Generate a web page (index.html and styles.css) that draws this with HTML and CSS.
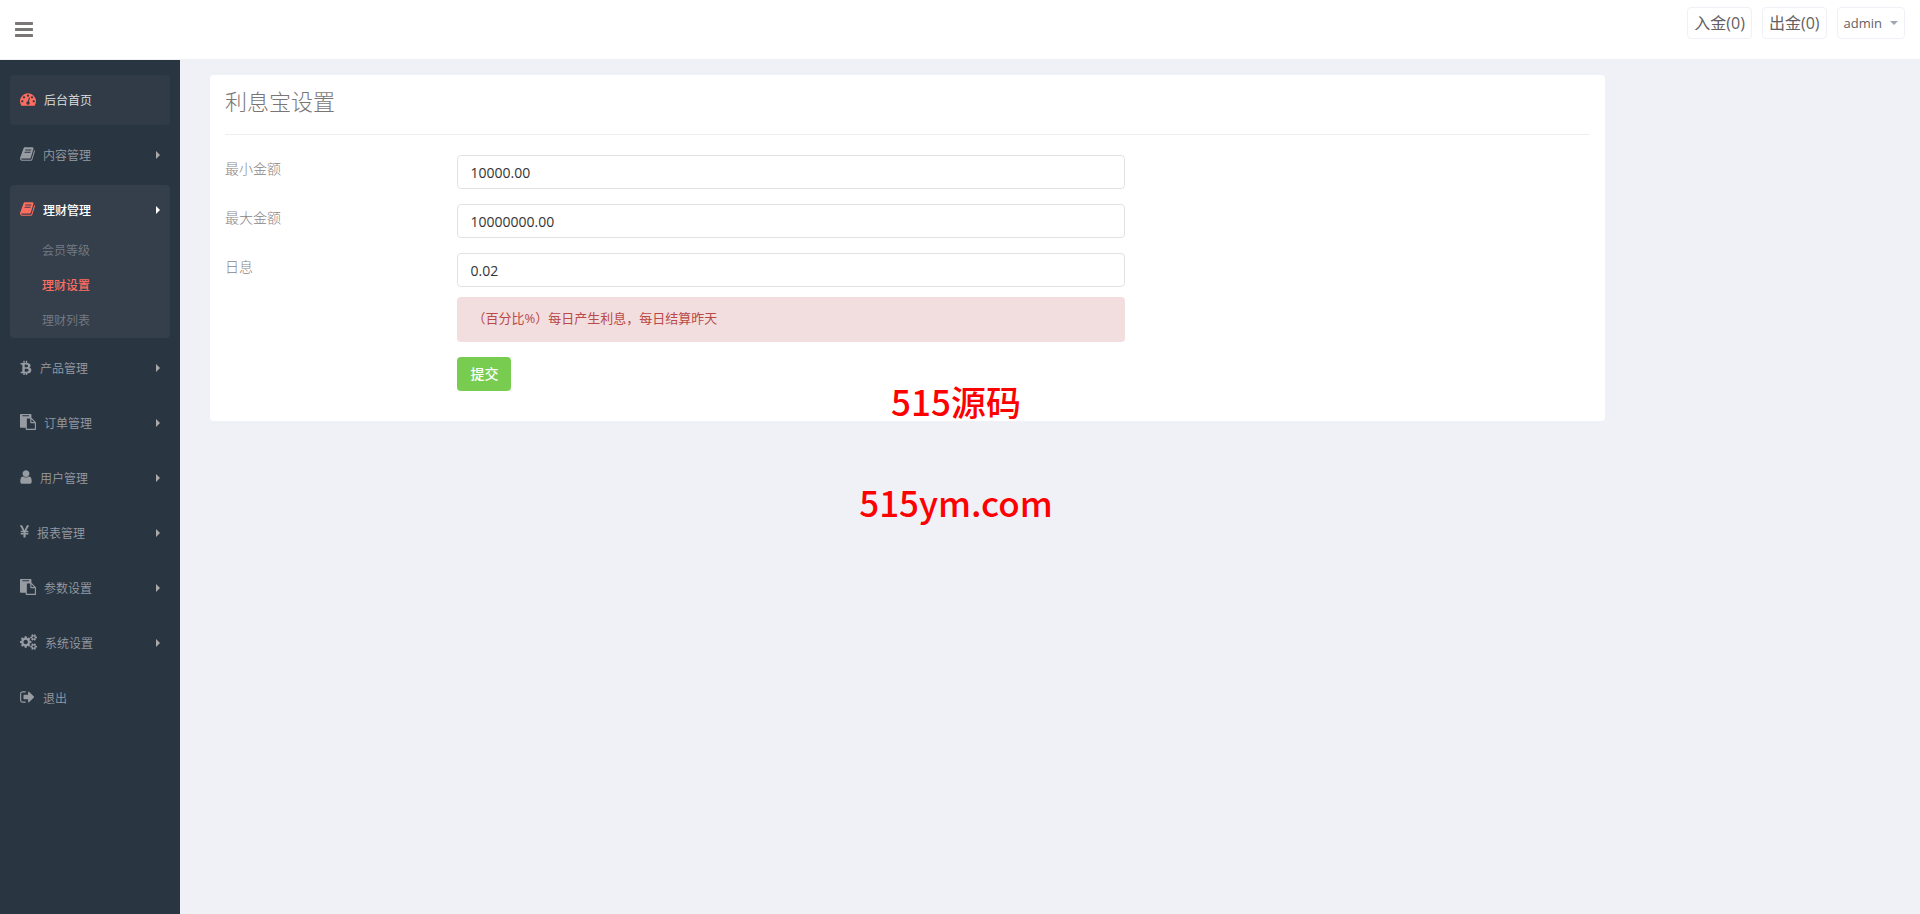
FILE: index.html
```html
<!DOCTYPE html>
<html lang="zh-CN">
<head>
  <meta charset="UTF-8" />
  <meta name="viewport" content="width=device-width, initial-scale=1.0">
  <title>利息宝设置</title>
  <link rel="stylesheet" href="styles.css">
</head>
<body>
  <header class="header">
    <button type="button" class="toggle-btn" aria-label="菜单">
      <svg class="icon" viewBox="128 256 1536 1280" width="18" height="15"><path d="M1664 1344v128q0 26-19 45t-45 19h-1408q-26 0-45-19t-19-45v-128q0-26 19-45t45-19h1408q26 0 45 19t19 45zm0-512v128q0 26-19 45t-45 19h-1408q-26 0-45-19t-19-45v-128q0-26 19-45t45-19h1408q26 0 45 19t19 45zm0-512v128q0 26-19 45t-45 19h-1408q-26 0-45-19t-19-45v-128q0-26 19-45t45-19h1408q26 0 45 19t19 45z"/></svg>
    </button>
    <div class="header-menu">
      <a href="#" class="header-btn">入金(0)</a>
      <a href="#" class="header-btn">出金(0)</a>
      <button type="button" class="header-btn user-btn">admin <span class="caret"></span></button>
    </div>
  </header>

  <div class="page">
    <nav class="sidebar">
      <ul class="menu">
        <li class="menu-item home">
          <a href="#">
            <svg class="icon" viewBox="0 0 1792 1792" width="16" height="16"><path d="M384 1152q0-53-37.5-90.5t-90.5-37.5-90.5 37.5-37.5 90.5 37.5 90.5 90.5 37.5 90.5-37.5 37.5-90.5zm192-448q0-53-37.5-90.5t-90.5-37.5-90.5 37.5-37.5 90.5 37.5 90.5 90.5 37.5 90.5-37.5 37.5-90.5zm428 481l101-382q6-26-7.5-48.5t-38.5-29.5-48 6.5-30 39.5l-101 382q-60 5-107 43.5t-63 98.5q-20 77 20 146t117 89 146-20 89-117q16-60-6-117t-72-91zm660-33q0-53-37.5-90.5t-90.5-37.5-90.5 37.5-37.5 90.5 37.5 90.5 90.5 37.5 90.5-37.5 37.5-90.5zm-640-640q0-53-37.5-90.5t-90.5-37.5-90.5 37.5-37.5 90.5 37.5 90.5 90.5 37.5 90.5-37.5 37.5-90.5zm448 192q0-53-37.5-90.5t-90.5-37.5-90.5 37.5-37.5 90.5 37.5 90.5 90.5 37.5 90.5-37.5 37.5-90.5zm320 448q0 261-141 483-19 29-54 29h-1402q-35 0-54-29-141-221-141-483 0-182 71-348t191-286 286-191 348-71 348 71 286 191 191 286 71 348z"/></svg>
            <span>后台首页</span>
          </a>
        </li>
        <li class="menu-item has-sub">
          <a href="#">
            <svg class="icon" viewBox="64 0 1664 1792" width="15" height="16"><path d="M1703 478q40 57 18 129l-275 906q-19 64-76.5 107.5t-122.5 43.5h-923q-77 0-148.5-53.5t-99.5-131.5q-24-67-2-127 0-4 3-27t4-37q1-8-3-21.5t-3-19.5q2-11 8-21t16.5-23.5 16.5-23.5q23-38 45-91.5t30-91.5q3-10 .5-30t-.5-28q3-11 17-28t17-23q21-36 42-92t25-90q1-9-2.5-32t.5-28q4-13 22-30.5t22-22.5q19-26 42.5-84.5t27.5-96.5q1-8-3-25.5t-2-26.5q2-8 9-18t18-23 17-21q8-12 16.5-30.5t15-35 16-36 19.5-32 26.5-23.5 36-11.5 47.5 5.5l-1 3q38-9 51-9h761q74 0 114 56t18 130l-274 906q-36 119-71.5 153.5t-128.5 34.5h-869q-27 0-38 15-11 16-1 43 24 70 144 70h923q29 0 56-15.5t35-41.5l300-987q7-22 5-57 38 15 59 43zm-1064 2q-4 13 2 22.5t20 9.5h608q13 0 25.5-9.5t16.5-22.5l21-64q4-13-2-22.5t-20-9.5h-608q-13 0-25.5 9.5t-16.5 22.5zm-83 256q-4 13 2 22.5t20 9.5h608q13 0 25.5-9.5t16.5-22.5l21-64q4-13-2-22.5t-20-9.5h-608q-13 0-25.5 9.5t-16.5 22.5z"/></svg>
            <span>内容管理</span>
          </a>
        </li>
        <li class="menu-item has-sub active">
          <a href="#">
            <svg class="icon" viewBox="64 0 1664 1792" width="15" height="16"><path d="M1703 478q40 57 18 129l-275 906q-19 64-76.5 107.5t-122.5 43.5h-923q-77 0-148.5-53.5t-99.5-131.5q-24-67-2-127 0-4 3-27t4-37q1-8-3-21.5t-3-19.5q2-11 8-21t16.5-23.5 16.5-23.5q23-38 45-91.5t30-91.5q3-10 .5-30t-.5-28q3-11 17-28t17-23q21-36 42-92t25-90q1-9-2.5-32t.5-28q4-13 22-30.5t22-22.5q19-26 42.5-84.5t27.5-96.5q1-8-3-25.5t-2-26.5q2-8 9-18t18-23 17-21q8-12 16.5-30.5t15-35 16-36 19.5-32 26.5-23.5 36-11.5 47.5 5.5l-1 3q38-9 51-9h761q74 0 114 56t18 130l-274 906q-36 119-71.5 153.5t-128.5 34.5h-869q-27 0-38 15-11 16-1 43 24 70 144 70h923q29 0 56-15.5t35-41.5l300-987q7-22 5-57 38 15 59 43zm-1064 2q-4 13 2 22.5t20 9.5h608q13 0 25.5-9.5t16.5-22.5l21-64q4-13-2-22.5t-20-9.5h-608q-13 0-25.5 9.5t-16.5 22.5zm-83 256q-4 13 2 22.5t20 9.5h608q13 0 25.5-9.5t16.5-22.5l21-64q4-13-2-22.5t-20-9.5h-608q-13 0-25.5 9.5t-16.5 22.5z"/></svg>
            <span>理财管理</span>
          </a>
          <ul class="sub-menu">
            <li><a href="#">会员等级</a></li>
            <li class="current"><a href="#">理财设置</a></li>
            <li><a href="#">理财列表</a></li>
          </ul>
        </li>
        <li class="menu-item has-sub">
          <a href="#">
            <svg class="icon" viewBox="256 0 1280 1792" width="12" height="16"><path d="M1399 713q18 182-131 258 117 28 175 103t45 214q-7 71-32.5 125t-64.5 89-97 58.5-121.5 34.5-145.5 15v255h-154v-251q-80 0-122-1v252h-154v-255q-18 0-54-.5t-55-.5h-200l31-183h111q50 0 58-51v-402h16q-6-1-16-1v-287q-13-68-89-68h-111v-164l212 1q64 0 97-1v-252h154v247q82-2 122-2v-245h154v252q79 7 140 22.5t113 45 82.5 78 36.5 114.5zm-215 545q0-36-15-64t-37-46-57.5-30.5-65.5-18.5-74-9-69-3-64.5 1-47.5 1v338q8 0 37 .5t48 .5 53-1.5 58.5-4 57-8.5 55.5-14 47.5-21 39.5-30 24.5-40 9.5-51zm-71-476q0-33-12.5-58.5t-30.5-42-48-28-55-16.5-61.5-8-58-2.5-54 1-39.5.5v307q5 0 34.5.5t46.5 0 50-2 55-5.5 51.5-11 48.5-18.5 37-27 27-38.5 9-51z"/></svg>
            <span>产品管理</span>
          </a>
        </li>
        <li class="menu-item has-sub">
          <a href="#">
            <svg class="icon" viewBox="0 0 1792 1792" width="16" height="16"><path d="M768 1664h896v-640h-416q-40 0-68-28t-28-68v-416h-384v1152zm256-1440v-64q0-13-9.5-22.5t-22.5-9.5h-704q-13 0-22.5 9.5t-9.5 22.5v64q0 13 9.5 22.5t22.5 9.5h704q13 0 22.5-9.5t9.5-22.5zm256 672h299l-299-299v299zm512 128v672q0 40-28 68t-68 28h-960q-40 0-68-28t-28-68v-160h-544q-40 0-68-28t-28-68v-1344q0-40 28-68t68-28h1088q40 0 68 28t28 68v328q21 13 36 28l408 408q28 28 48 76t20 88z"/></svg>
            <span>订单管理</span>
          </a>
        </li>
        <li class="menu-item has-sub">
          <a href="#">
            <svg class="icon" viewBox="256 0 1280 1792" width="12" height="16"><path d="M1536 1399q0 109-62.5 187t-150.5 78h-854q-88 0-150.5-78t-62.5-187q0-85 8.5-160.5t31.5-152 58.5-131 94-89 134.5-34.5q131 128 313 128t313-128q76 0 134.5 34.5t94 89 58.5 131 31.5 152 8.5 160.5zm-256-887q0 159-112.5 271.5t-271.5 112.5-271.5-112.5-112.5-271.5 112.5-271.5 271.5-112.5 271.5 112.5 112.5 271.5z"/></svg>
            <span>用户管理</span>
          </a>
        </li>
        <li class="menu-item has-sub">
          <a href="#">
            <svg class="icon" viewBox="384 0 1027 1792" width="9" height="16"><path d="M985.5 1536h-172q-13 0-22.5-9t-9.5-23v-330h-288q-13 0-22.5-9t-9.5-23v-103q0-13 9.5-22.5t22.5-9.5h288v-85h-288q-13 0-22.5-9t-9.5-23v-104q0-13 9.5-22.5t22.5-9.5h214l-321-578q-8-16 0-32 10-16 28-16h194q19 0 29 18l215 425q19 38 56 125 10-24 30.5-68t27.5-61l191-420q8-19 29-19h191q17 0 27 16 9 14 1 31l-313 579h215q13 0 22.5 9.5t9.5 22.5v104q0 14-9.5 23t-22.5 9h-290v85h290q13 0 22.5 9.5t9.5 22.5v103q0 14-9.5 23t-22.5 9h-290v330q0 13-9.5 22.5t-22.5 9.5z"/></svg>
            <span>报表管理</span>
          </a>
        </li>
        <li class="menu-item has-sub">
          <a href="#">
            <svg class="icon" viewBox="0 0 1792 1792" width="16" height="16"><path d="M768 1664h896v-640h-416q-40 0-68-28t-28-68v-416h-384v1152zm256-1440v-64q0-13-9.5-22.5t-22.5-9.5h-704q-13 0-22.5 9.5t-9.5 22.5v64q0 13 9.5 22.5t22.5 9.5h704q13 0 22.5-9.5t9.5-22.5zm256 672h299l-299-299v299zm512 128v672q0 40-28 68t-68 28h-960q-40 0-68-28t-28-68v-160h-544q-40 0-68-28t-28-68v-1344q0-40 28-68t68-28h1088q40 0 68 28t28 68v328q21 13 36 28l408 408q28 28 48 76t20 88z"/></svg>
            <span>参数设置</span>
          </a>
        </li>
        <li class="menu-item has-sub">
          <a href="#">
            <svg class="icon" viewBox="0 0 1920 1792" width="17" height="16"><path d="M896 896q0-106-75-181t-181-75-181 75-75 181 75 181 181 75 181-75 75-181zm768 512q0-52-38-90t-90-38-90 38-38 90q0 53 37.5 90.5t90.5 37.5 90.5-37.5 37.5-90.5zm0-1024q0-52-38-90t-90-38-90 38-38 90q0 53 37.5 90.5t90.5 37.5 90.5-37.5 37.5-90.5zm-384 421v185q0 10-7 19.5t-16 10.5l-155 24q-11 35-32 76 34 48 90 115 7 11 7 20 0 12-7 19-23 30-82.5 89.5t-78.5 59.5q-11 0-21-7l-115-90q-37 19-77 31-11 108-23 155-7 24-30 24h-186q-11 0-20-7.5t-10-17.5l-23-153q-34-10-75-31l-118 89q-7 7-20 7-11 0-21-8-144-133-144-160 0-9 7-19 10-14 41-53t47-61q-23-44-35-82l-152-24q-10-1-17-9.5t-7-19.5v-185q0-10 7-19.5t16-10.5l155-24q11-35 32-76-34-48-90-115-7-11-7-20 0-12 7-20 22-30 82-89t79-59q11 0 21 7l115 90q34-18 77-32 11-108 23-154 7-24 30-24h186q11 0 20 7.5t10 17.5l23 153q34 10 75 31l118-89q8-7 20-7 11 0 21 8 144 133 144 160 0 8-7 19-12 16-42 54t-45 60q23 48 34 82l152 23q10 2 17 10.5t7 19.5zm640 533v140q0 16-149 31-12 27-30 52 51 113 51 138 0 4-4 7-122 71-124 71-8 0-46-47t-52-68q-20 2-30 2t-30-2q-14 21-52 68t-46 47q-2 0-124-71-4-3-4-7 0-25 51-138-18-25-30-52-149-15-149-31v-140q0-16 149-31 13-29 30-52-51-113-51-138 0-4 4-7 4-2 35-20t59-34 30-16q8 0 46 46.5t52 67.5q20-2 30-2t30 2q51-71 92-112l6-2q4 0 124 70 4 3 4 7 0 25-51 138 17 23 30 52 149 15 149 31zm0-1024v140q0 16-149 31-12 27-30 52 51 113 51 138 0 4-4 7-122 71-124 71-8 0-46-47t-52-68q-20 2-30 2t-30-2q-14 21-52 68t-46 47q-2 0-124-71-4-3-4-7 0-25 51-138-18-25-30-52-149-15-149-31v-140q0-16 149-31 13-29 30-52-51-113-51-138 0-4 4-7 4-2 35-20t59-34 30-16q8 0 46 46.5t52 67.5q20-2 30-2t30 2q51-71 92-112l6-2q4 0 124 70 4 3 4 7 0 25-51 138 17 23 30 52 149 15 149 31z"/></svg>
            <span>系统设置</span>
          </a>
        </li>
        <li class="menu-item">
          <a href="#">
            <svg class="icon" viewBox="64 0 1664 1792" width="15" height="16"><path d="M704 1440q0 4 1 20t.5 26.5-3 23.5-10 19.5-20.5 6.5h-320q-119 0-203.5-84.5t-84.5-203.5v-704q0-119 84.5-203.5t203.5-84.5h320q13 0 22.5 9.5t9.5 22.5q0 4 1 20t.5 26.5-3 23.5-10 19.5-20.5 6.5h-320q-66 0-113 47t-47 113v704q0 66 47 113t113 47h312l11.5 1 11.5 3 8 5.5 7 9 2 13.5zm928-544q0 26-19 45l-544 544q-19 19-45 19t-45-19-19-45v-288h-448q-26 0-45-19t-19-45v-384q0-26 19-45t45-19h448v-288q0-26 19-45t45-19 45 19l544 544q19 19 19 45z"/></svg>
            <span>退出</span>
          </a>
        </li>
      </ul>
    </nav>

    <main class="wrapper">
      <section class="col">
        <div class="panel">
          <h1>利息宝设置</h1>
          <form>
            <div class="form-group">
              <label for="minMoney">最小金额</label>
              <div class="field"><input type="text" id="minMoney" value="10000.00"></div>
            </div>
            <div class="form-group">
              <label for="maxMoney">最大金额</label>
              <div class="field"><input type="text" id="maxMoney" value="10000000.00"></div>
            </div>
            <div class="form-group">
              <label for="dayRate">日息</label>
              <div class="field">
                <input type="text" id="dayRate" value="0.02">
                <div class="alert">（百分比%）每日产生利息，每日结算昨天</div>
              </div>
            </div>
            <div class="form-group">
              <div class="field offset"><button type="submit" class="submit-btn">提交</button></div>
            </div>
          </form>
        </div>
      </section>
    </main>
  </div>

  <div class="watermark">
    <p>515源码</p>
    <p class="site">515ym.com</p>
  </div>
</body>
</html>
```
FILE: styles.css
```css
* {
  box-sizing: border-box;
}

body {
  margin: 0;
  min-height: 100vh;
  display: flex;
  flex-direction: column;
  background: #f0f1f7;
  color: #7a7676;
  font-family: 'Open Sans', 'Noto Sans CJK SC', sans-serif;
  font-size: 14px;
  line-height: 20px;
}

a {
  color: inherit;
  text-decoration: none;
}

ul {
  list-style: none;
  margin: 0;
  padding: 0;
}

button,
input {
  font-family: inherit;
}

.icon {
  display: block;
  flex: none;
  fill: currentColor;
}

/* header */
.header {
  display: flex;
  justify-content: space-between;
  align-items: flex-start;
  height: 60px;
  background: #fff;
  border-bottom: 1px solid #f0f1f7;
}

.toggle-btn {
  height: 59px;
  padding: 0 15px;
  border: none;
  background: none;
  color: #7a7676;
  cursor: pointer;
}

.header-menu {
  display: flex;
  gap: 10px;
  padding: 7px 15px 0 0;
}

.header-btn {
  display: flex;
  align-items: center;
  height: 32px;
  padding: 0 6px;
  border: 1px solid #f0f1f7;
  border-radius: 4px;
  background: #fff;
  color: #65605f;
  font-size: 16px;
}

.user-btn {
  gap: 8px;
  font-size: 13px;
  cursor: pointer;
}

.caret {
  border-top: 4px solid #a2a5b5;
  border-left: 4px solid transparent;
  border-right: 4px solid transparent;
}

/* sidebar */
.page {
  display: flex;
  flex: 1;
}

.sidebar {
  flex: none;
  width: 180px;
  padding: 15px 10px;
  background: #2a3542;
}

.menu {
  display: flex;
  flex-direction: column;
  gap: 5px;
}

.menu-item {
  border-radius: 4px;
  color: #979ca2;
  font-size: 12px;
}

.menu-item > a {
  display: flex;
  align-items: center;
  gap: 8px;
  height: 50px;
  padding: 0 10px;
}

.menu-item .icon {
  margin-bottom: 2px;
}

.menu-item span {
  padding-top: 1px;
  font-weight: 350;
}

.has-sub > a::after {
  content: "";
  margin-left: auto;
  border-left: 4px solid #aaa;
  border-top: 4px solid transparent;
  border-bottom: 4px solid transparent;
}

.home {
  background: #303b47;
  color: #e0e2e4;
}

.home .icon,
.active .icon {
  color: #ff6c60;
}

.active {
  background: #353f4b;
}

.active > a {
  color: #fff;
}

.active > a span {
  font-weight: 500;
}

.active > a::after {
  border-left-color: #fff;
}

.sub-menu {
  margin-top: -2px;
}

.sub-menu a {
  display: block;
  padding-left: 32px;
  line-height: 35px;
  color: #757c84;
  font-weight: 350;
}

.sub-menu .current a {
  color: #ff6c60;
  font-weight: 500;
}

/* content */
.wrapper {
  flex: 1;
  padding: 15px;
}

.col {
  width: 83.3333%;
  padding: 0 15px;
}

.panel {
  padding: 0 15px 15px;
  border-radius: 4px;
  background: #fff;
}

.panel h1 {
  margin: 0 0 20px;
  padding: 14px 0 21px;
  border-bottom: 1px solid #eee;
  font-size: 22px;
  font-weight: 300;
  line-height: 24px;
}

.form-group {
  display: flex;
  margin: 0 -15px 15px;
}

.form-group label {
  width: 16.6667%;
  padding: 4px 15px 0;
  color: #8a8687;
  font-weight: 300;
}

.field {
  width: 50%;
  padding: 0 15px;
}

.offset {
  margin-left: 16.6667%;
}

.field input {
  display: block;
  width: 100%;
  height: 34px;
  padding: 6px 12px;
  border: 1px solid #e2e2e4;
  border-radius: 4px;
  color: #333;
  font-size: 14px;
}

.alert {
  margin-top: 10px;
  padding: 11px 15px 14px;
  border-radius: 4px;
  background: #f2dede;
  color: #b94a48;
  font-size: 13px;
}

.submit-btn {
  display: block;
  height: 34px;
  padding: 0 13px 2px;
  border: none;
  border-radius: 4px;
  background: #78cd51;
  color: #fff;
  font-size: 14px;
  font-weight: 500;
  cursor: pointer;
}

/* floats over the whole page */
.watermark {
  position: absolute;
  top: 382px;
  left: 0;
  right: 8px;
  color: #f00;
  font-family: 'Noto Sans CJK SC', sans-serif;
  font-size: 35px;
  font-weight: 500;
  line-height: 38px;
  text-align: center;
  pointer-events: none;
}

.watermark p {
  margin: 0;
}

.watermark .site {
  margin-top: 63px;
}
```
